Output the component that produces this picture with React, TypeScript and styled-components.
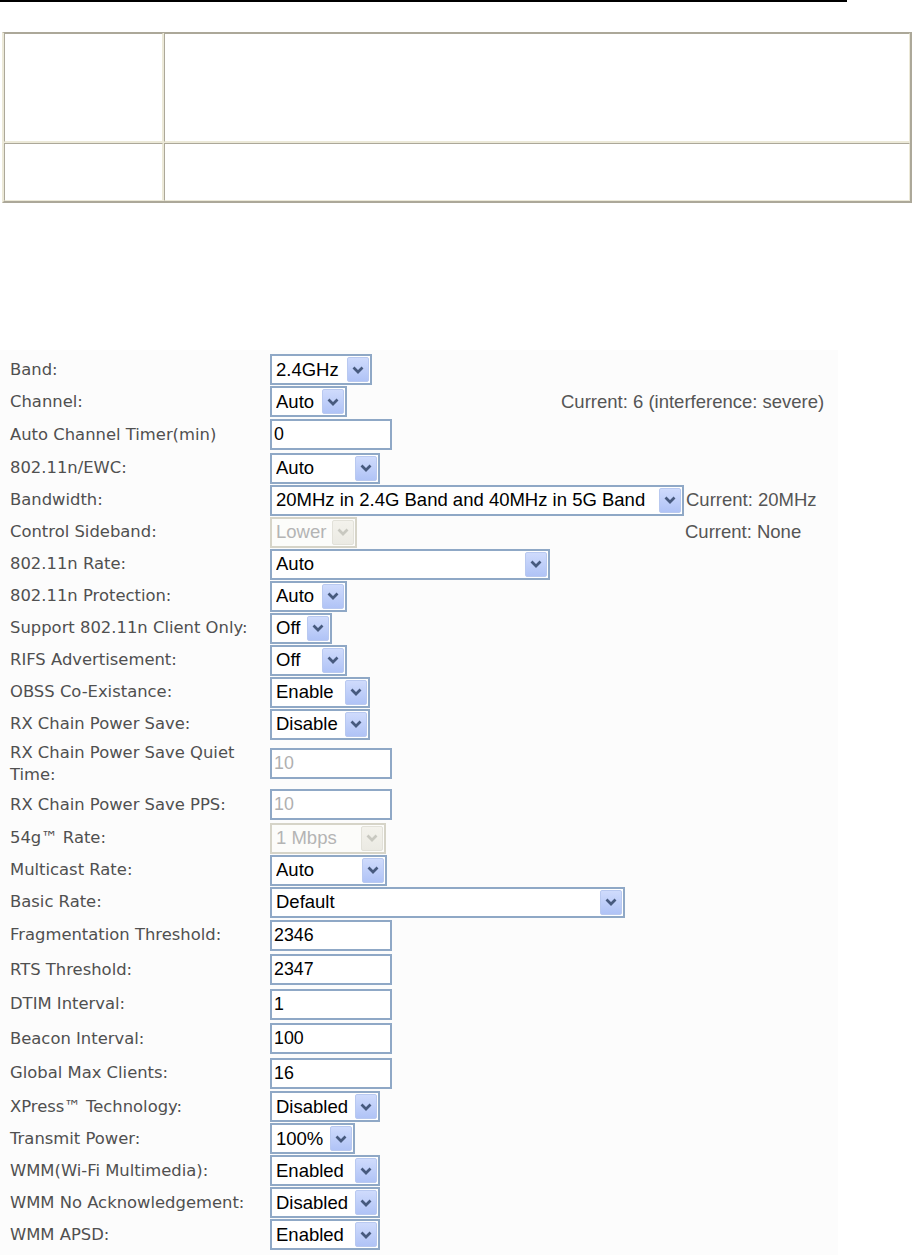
import * as React from 'react';
import styled, { createGlobalStyle } from 'styled-components';

type Field = {
    label: string;
    kind: 'select' | 'input';
    value: string;
    width: number;
    disabled?: boolean;
    current?: string;
    currentGap?: number;
};

const fields: Field[] = [
    { label: 'Band:', kind: 'select', value: '2.4GHz', width: 102 },
    { label: 'Channel:', kind: 'select', value: 'Auto', width: 77, current: 'Current: 6 (interference: severe)', currentGap: 214 },
    { label: 'Auto Channel Timer(min)', kind: 'input', value: '0', width: 122 },
    { label: '802.11n/EWC:', kind: 'select', value: 'Auto', width: 110 },
    { label: 'Bandwidth:', kind: 'select', value: '20MHz in 2.4G Band and 40MHz in 5G Band', width: 414, current: 'Current: 20MHz', currentGap: 2 },
    { label: 'Control Sideband:', kind: 'select', value: 'Lower', width: 87, disabled: true, current: 'Current: None', currentGap: 328 },
    { label: '802.11n Rate:', kind: 'select', value: 'Auto', width: 280 },
    { label: '802.11n Protection:', kind: 'select', value: 'Auto', width: 77 },
    { label: 'Support 802.11n Client Only:', kind: 'select', value: 'Off', width: 62 },
    { label: 'RIFS Advertisement:', kind: 'select', value: 'Off', width: 77 },
    { label: 'OBSS Co-Existance:', kind: 'select', value: 'Enable', width: 100 },
    { label: 'RX Chain Power Save:', kind: 'select', value: 'Disable', width: 100 },
    { label: 'RX Chain Power Save Quiet\nTime:', kind: 'input', value: '10', width: 122, disabled: true },
    { label: 'RX Chain Power Save PPS:', kind: 'input', value: '10', width: 122, disabled: true },
    { label: '54g\u2122 Rate:', kind: 'select', value: '1 Mbps', width: 116, disabled: true },
    { label: 'Multicast Rate:', kind: 'select', value: 'Auto', width: 117 },
    { label: 'Basic Rate:', kind: 'select', value: 'Default', width: 355 },
    { label: 'Fragmentation Threshold:', kind: 'input', value: '2346', width: 122 },
    { label: 'RTS Threshold:', kind: 'input', value: '2347', width: 122 },
    { label: 'DTIM Interval:', kind: 'input', value: '1', width: 122 },
    { label: 'Beacon Interval:', kind: 'input', value: '100', width: 122 },
    { label: 'Global Max Clients:', kind: 'input', value: '16', width: 122 },
    { label: 'XPress\u2122 Technology:', kind: 'select', value: 'Disabled', width: 110 },
    { label: 'Transmit Power:', kind: 'select', value: '100%', width: 85 },
    { label: 'WMM(Wi-Fi Multimedia):', kind: 'select', value: 'Enabled', width: 110 },
    { label: 'WMM No Acknowledgement:', kind: 'select', value: 'Disabled', width: 110 },
    { label: 'WMM APSD:', kind: 'select', value: 'Enabled', width: 110 },
];

const Chevron = ({ disabled }: { disabled?: boolean }) => (
    <svg width="12" height="8" viewBox="0 0 12 8">
        <path d="M1.5 1.5 L6 6 L10.5 1.5" fill="none" stroke={disabled ? '#c8c8c0' : '#475a7e'} strokeWidth="2.7" />
    </svg>
);

const Select = ({ value, width, disabled }: { value: string; width: number; disabled?: boolean }) => (
    <SelectBox $width={width} $disabled={disabled}>
        <SelectValue $disabled={disabled}>{value}</SelectValue>
        <ArrowButton $disabled={disabled}>
            <Chevron disabled={disabled} />
        </ArrowButton>
    </SelectBox>
);

const App = () => (
    <Page>
        <GlobalStyle />
        <Rule />
        <InfoTable>
            <InfoCell />
            <InfoCell />
            <InfoCell />
            <InfoCell />
        </InfoTable>
        <FormPanel>
            {fields.map(field => (
                <Row key={field.label}>
                    <Label>{field.label}</Label>
                    {field.kind === 'select'
                        ? <Select value={field.value} width={field.width} disabled={field.disabled} />
                        : <TextBox $width={field.width} $disabled={field.disabled}>{field.value}</TextBox>}
                    {field.current && <Current $gap={field.currentGap || 0}>{field.current}</Current>}
                </Row>
            ))}
        </FormPanel>
    </Page>
);

const GlobalStyle = createGlobalStyle`
    html, body {
        margin: 0;
        padding: 0;
        background: #ffffff;
    }
    body {
        font-family: "Liberation Sans", Arial, sans-serif;
    }
`;

const Page = styled.div`
    width: 914px;
    height: 1255px;
    overflow: hidden;
    background: #ffffff;
`;

const Rule = styled.div`
    width: 847px;
    height: 2px;
    background: #000000;
`;

const InfoTable = styled.div`
    margin: 30px 2px 0 2px;
    display: grid;
    grid-template-columns: 159px 1fr;
    grid-template-rows: 109px 58px;
    gap: 1px;
    background: #ece9d8;
    border-style: solid;
    border-width: 1px 2px 2px 2px;
    border-color: #aca899 #aca899 #aca899 #ece9d8;
`;

const InfoCell = styled.div`
    background: #ffffff;
    border: 1px solid;
    border-color: #aca899 #ece9d8 #ece9d8 #aca899;
`;

const FormPanel = styled.div`
    margin-top: 147px;
    width: 838px;
    height: 906px;
    padding: 3.5px 0 0 10px;
    box-sizing: border-box;
    background: #fcfcfc;
`;

const Row = styled.div`
    display: flex;
    align-items: center;
`;

const Label = styled.div`
    width: 260px;
    flex-shrink: 0;
    padding: 1.75px 0;
    font-family: "DejaVu Sans", Verdana, sans-serif;
    font-size: 16.4px;
    line-height: 22px;
    color: #505050;
    white-space: pre;
`;

const SelectBox = styled.div<{ $width: number; $disabled?: boolean }>`
    box-sizing: border-box;
    width: ${p => p.$width}px;
    height: 31px;
    margin: 0.5px 0;
    display: flex;
    align-items: center;
    padding-left: 4px;
    border: 2px solid ${p => (p.$disabled ? '#d6d4c8' : '#8fa8c6')};
    background: ${p => (p.$disabled ? '#fcfcfa' : '#ffffff')};
    flex-shrink: 0;
`;

const SelectValue = styled.span<{ $disabled?: boolean }>`
    flex: 1;
    font-size: 18.5px;
    white-space: nowrap;
    overflow: hidden;
    color: ${p => (p.$disabled ? '#b4b4b4' : '#000000')};
`;

const ArrowButton = styled.div<{ $disabled?: boolean }>`
    box-sizing: border-box;
    width: 22px;
    height: 25px;
    margin-right: 1px;
    display: flex;
    align-items: center;
    justify-content: center;
    border-radius: 2px;
    border: 1px solid ${p => (p.$disabled ? '#e2e1d9' : '#b9c9f0')};
    background: ${p => (p.$disabled
        ? 'linear-gradient(#f3f2ec, #ebeae3)'
        : 'linear-gradient(#cfdbfc, #b0c3f6)')};
`;

const TextBox = styled.div<{ $width: number; $disabled?: boolean }>`
    box-sizing: border-box;
    width: ${p => p.$width}px;
    height: 31px;
    margin: 1.75px 0;
    display: flex;
    align-items: center;
    padding-left: 2px;
    border: 2px solid #8fa8c6;
    background: #ffffff;
    font-size: 17.8px;
    color: ${p => (p.$disabled ? '#b0b0b0' : '#000000')};
    flex-shrink: 0;
`;

const Current = styled.div<{ $gap: number }>`
    margin-left: ${p => p.$gap}px;
    font-size: 18.5px;
    color: #555555;
    white-space: nowrap;
`;

export default App;
